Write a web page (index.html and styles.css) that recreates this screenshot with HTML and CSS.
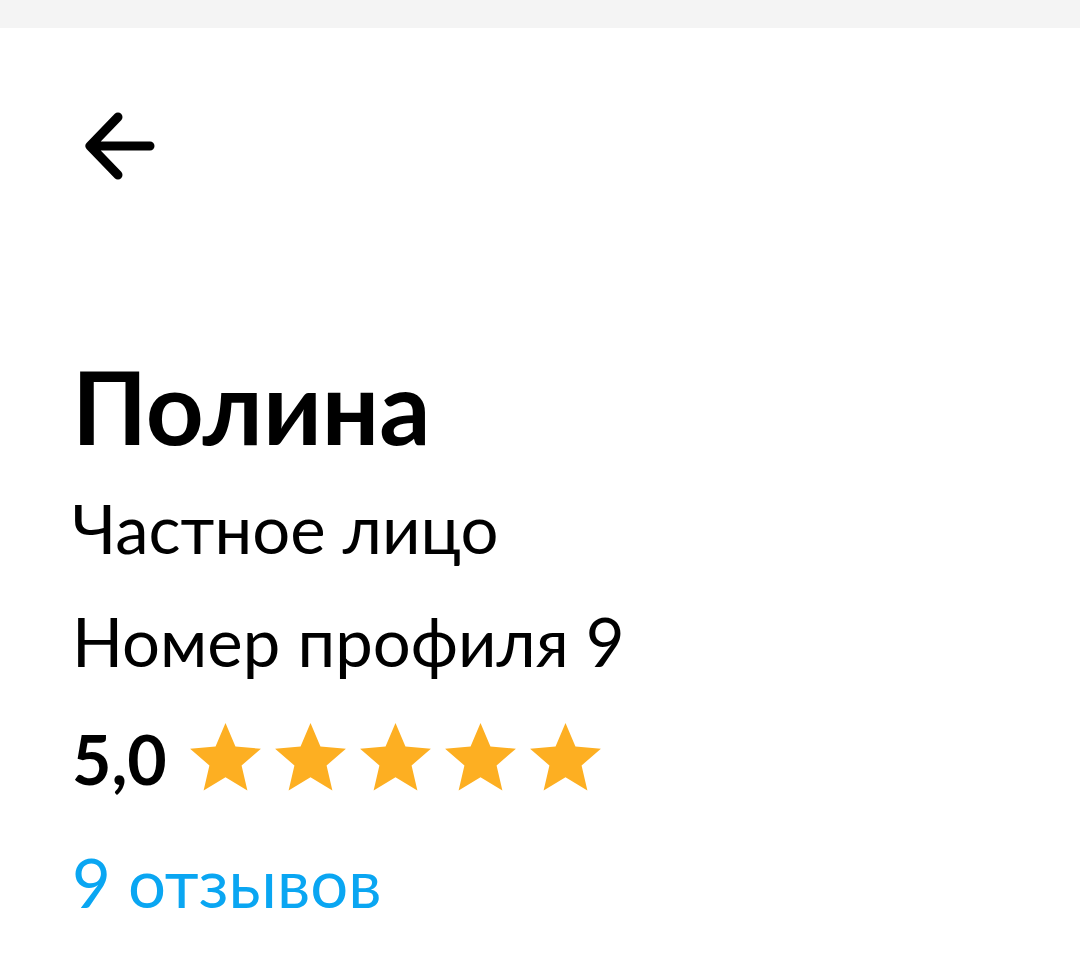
FILE: index.html
```html
<!DOCTYPE html>
<html lang="ru">
<head>
    <meta charset="UTF-8">
    <meta name="viewport" content="width=device-width, initial-scale=1.0">
    <title>Полина</title>
    <link rel="stylesheet" href="styles.css">
</head>
<body>

    <div class="status-bar"></div>

    <header class="toolbar">
        <a href="#" class="back" aria-label="Назад">
            <svg width="72" height="68" viewBox="0 0 72 68">
                <path d="M66 34H6M34 5L6 34l28 29" fill="none" stroke="#000" stroke-width="9" stroke-linecap="round" stroke-linejoin="round"/>
            </svg>
        </a>
    </header>

    <main class="profile">
        <h1 class="name">Полина</h1>
        <div class="line">Частное лицо</div>
        <div class="line">Номер профиля 9</div>
        <div class="rating">
            <span class="score">5,0</span>
            <span class="stars">
                <svg viewBox="0 0 24 24"><path d="M12 17.27L18.18 21l-1.64-7.03L22 9.24l-7.19-.61L12 2 9.19 8.63 2 9.24l5.46 4.73L5.82 21z"/></svg>
                <svg viewBox="0 0 24 24"><path d="M12 17.27L18.18 21l-1.64-7.03L22 9.24l-7.19-.61L12 2 9.19 8.63 2 9.24l5.46 4.73L5.82 21z"/></svg>
                <svg viewBox="0 0 24 24"><path d="M12 17.27L18.18 21l-1.64-7.03L22 9.24l-7.19-.61L12 2 9.19 8.63 2 9.24l5.46 4.73L5.82 21z"/></svg>
                <svg viewBox="0 0 24 24"><path d="M12 17.27L18.18 21l-1.64-7.03L22 9.24l-7.19-.61L12 2 9.19 8.63 2 9.24l5.46 4.73L5.82 21z"/></svg>
                <svg viewBox="0 0 24 24"><path d="M12 17.27L18.18 21l-1.64-7.03L22 9.24l-7.19-.61L12 2 9.19 8.63 2 9.24l5.46 4.73L5.82 21z"/></svg>
            </span>
        </div>
        <a href="#" class="reviews">9 отзывов</a>
    </main>

</body>
</html>
```

FILE: styles.css
```css
body {
    margin: 0;
    font-family: Lato, "Open Sans", "Noto Sans", sans-serif;
    color: #000;
    background: #fff;
}
.status-bar {
    height: 28px;
    background: #f4f4f4;
}
.toolbar {
    padding: 84px 0 0 84px;
    height: 112px;
}
.back {
    display: block;
    width: 72px;
    height: 68px;
}
.back svg {
    display: block;
}
.profile {
    padding: 122px 0 0 72px;
}
.name {
    margin: 0 0 6px;
    font-size: 101px;
    line-height: 120px;
    font-weight: 700;
}
.line {
    font-size: 67px;
    line-height: 113px;
}
.rating {
    display: flex;
    align-items: center;
    margin-top: 4px;
    height: 113px;
}
.score {
    font-size: 68px;
    font-weight: 700;
    line-height: 113px;
    margin-right: 16px;
}
.stars {
    display: flex;
}
.stars svg {
    width: 85px;
    height: 85px;
    fill: #fdaf22;
}
.reviews {
    display: block;
    margin-top: 11px;
    font-size: 67px;
    line-height: 113px;
    color: #0aa6f2;
    text-decoration: none;
}
```
